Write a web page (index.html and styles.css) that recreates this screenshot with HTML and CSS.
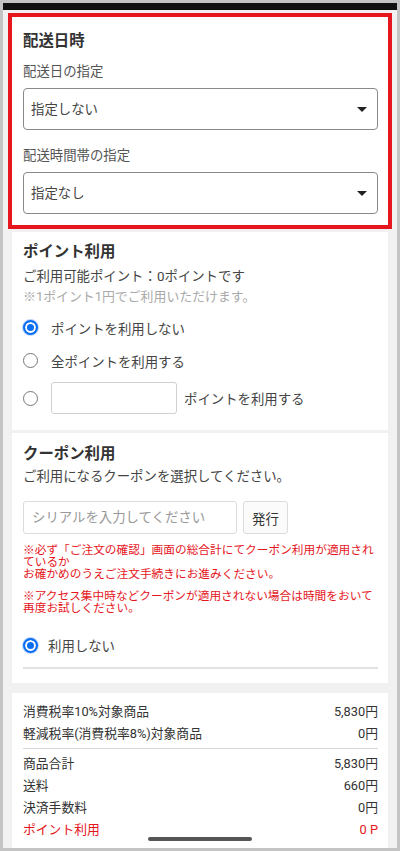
FILE: index.html
```html
<!DOCTYPE html>
<html lang="ja">
<head>
  <meta charset="UTF-8">
  <meta name="viewport" content="width=device-width, initial-scale=1.0">
  <title>ご注文手続き</title>
  <link rel="stylesheet" href="styles.css">
</head>
<body>
  <div class="screen">
    <div class="status-bar"></div>
    <div class="content">

      <section class="card card-delivery">
        <h2 class="card-title">配送日時</h2>
        <label class="field-label" for="deliveryDate">配送日の指定</label>
        <div class="select-box">
          <select id="deliveryDate">
            <option>指定しない</option>
          </select>
        </div>
        <label class="field-label field-label-second" for="deliveryTime">配送時間帯の指定</label>
        <div class="select-box">
          <select id="deliveryTime">
            <option>指定なし</option>
          </select>
        </div>
      </section>

      <section class="card card-point">
        <h2 class="card-title">ポイント利用</h2>
        <p class="point-available">ご利用可能ポイント：0ポイントです</p>
        <p class="point-note">※1ポイント1円でご利用いただけます。</p>
        <label class="radio-row">
          <input type="radio" class="radio" name="point" checked>
          <span>ポイントを利用しない</span>
        </label>
        <label class="radio-row">
          <input type="radio" class="radio" name="point">
          <span>全ポイントを利用する</span>
        </label>
        <div class="radio-row radio-row-input">
          <input type="radio" class="radio" name="point">
          <input type="text" class="point-input">
          <span>ポイントを利用する</span>
        </div>
      </section>

      <section class="card card-coupon">
        <h2 class="card-title">クーポン利用</h2>
        <p class="coupon-lead">ご利用になるクーポンを選択してください。</p>
        <div class="serial-row">
          <input type="text" class="serial-input" placeholder="シリアルを入力してください">
          <button class="btn-issue">発行</button>
        </div>
        <p class="coupon-warning">※必ず「ご注文の確認」画面の総合計にてクーポン利用が適用され<br>ているか<br>お確かめのうえご注文手続きにお進みください。</p>
        <p class="coupon-warning">※アクセス集中時などクーポンが適用されない場合は時間をおいて再度お試しください。</p>
        <label class="radio-row radio-row-coupon">
          <input type="radio" class="radio" name="coupon" checked>
          <span>利用しない</span>
        </label>
        <div class="divider"></div>
      </section>

      <section class="card card-total">
        <div class="total-row"><span>消費税率10%対象商品</span><span>5,830円</span></div>
        <div class="total-row"><span>軽減税率(消費税率8%)対象商品</span><span>0円</span></div>
        <div class="total-divider"></div>
        <div class="total-row"><span>商品合計</span><span>5,830円</span></div>
        <div class="total-row"><span>送料</span><span>660円</span></div>
        <div class="total-row"><span>決済手数料</span><span>0円</span></div>
        <div class="total-row total-row-red"><span>ポイント利用</span><span>0 P</span></div>
      </section>

    </div>
    <div class="home-indicator"></div>
  </div>
</body>
</html>
```

FILE: styles.css
```css
body {
  margin: 0;
  font-family: Roboto, "Noto Sans CJK JP", sans-serif;
  color: #333;
}
.screen {
  position: relative;
  width: 400px;
  height: 851px;
  box-sizing: border-box;
  border: 3px solid #c4c4c4;
  background-color: #f1f1f1;
  overflow: hidden;
}
.status-bar {
  height: 7px;
  background-color: #111;
}
.content {
  padding: 0 9px;
}
.card {
  background-color: white;
  padding: 0 10px 0 11px;
}
.card-title {
  margin: 0;
  font-size: 15.4px;
  line-height: 22px;
  font-weight: bold;
  color: #333;
}

/* 配送日時 */
.card-delivery {
  margin-top: 7px;
  padding-top: 13px;
  padding-bottom: 11px;
  outline: 4px solid #e5161d;
}
.field-label {
  display: block;
  margin-top: 10px;
  font-size: 13.4px;
  line-height: 20px;
  color: #555;
}
.field-label-second {
  margin-top: 16px;
}
.select-box {
  position: relative;
  margin-top: 6px;
}
.select-box select {
  appearance: none;
  -webkit-appearance: none;
  width: 100%;
  height: 42px;
  box-sizing: border-box;
  padding: 0 30px 0 7px;
  border: 1px solid #8a8a8a;
  border-radius: 4px;
  background-color: white;
  font-family: inherit;
  font-size: 13.4px;
  color: #444;
}
.select-box::after {
  content: "";
  position: absolute;
  right: 11px;
  top: 19px;
  border-left: 5px solid transparent;
  border-right: 5px solid transparent;
  border-top: 5px solid #222;
}

/* ポイント利用 */
.card-point {
  margin-top: 7px;
  padding-top: 9px;
  padding-bottom: 15px;
}
.point-available {
  margin: 3px 0 0;
  font-size: 13.4px;
  line-height: 21px;
  color: #444;
}
.point-note {
  margin: 0;
  font-size: 12.9px;
  line-height: 20px;
  color: #aaa;
}
.radio-row {
  display: flex;
  align-items: center;
  height: 33px;
  font-size: 13.4px;
  color: #444;
}
.card-point .radio-row:first-of-type {
  margin-top: 4px;
}
.radio-row .radio {
  margin: 0 13px 0 0;
}
.radio-row-input {
  height: 34px;
  margin-top: 6px;
}
.radio {
  appearance: none;
  -webkit-appearance: none;
  flex: none;
  width: 15px;
  height: 15px;
  box-sizing: border-box;
  border: 1.5px solid #777;
  border-radius: 50%;
  background-color: white;
}
.radio:checked {
  border: 2px solid #0b6ef0;
  background-color: #0b6ef0;
  box-shadow: inset 0 0 0 2px white, 0 0 0 1px #bcd6fa;
}
.point-input {
  width: 126px;
  height: 32px;
  box-sizing: border-box;
  margin-right: 7px;
  border: 1px solid #d0d0d0;
  border-radius: 3px;
}

/* クーポン利用 */
.card-coupon {
  margin-top: 3px;
  padding-top: 10px;
  padding-bottom: 14px;
}
.coupon-lead {
  margin: 2px 0 0;
  font-size: 13.4px;
  line-height: 20px;
  color: #444;
}
.serial-row {
  display: flex;
  gap: 6px;
  margin-top: 14px;
}
.serial-input {
  width: 214px;
  height: 33px;
  box-sizing: border-box;
  padding: 0 8px;
  border: 1px solid #dcdcdc;
  border-radius: 3px;
  font-family: inherit;
  font-size: 13.4px;
}
.serial-input::placeholder {
  color: #999;
}
.btn-issue {
  width: 45px;
  height: 33px;
  padding: 0;
  border: 1px solid #dcdcdc;
  border-radius: 3px;
  background-color: #fbfbfb;
  font-family: inherit;
  font-size: 13.4px;
  color: #333;
}
.coupon-warning {
  margin: 10px 0 0;
  font-size: 11.7px;
  line-height: 12px;
  color: #e5161d;
}
.radio-row-coupon {
  height: 30px;
  margin-top: 16px;
}
.radio-row-coupon .radio {
  margin-right: 10px;
}
.divider {
  height: 2px;
  margin-top: 7px;
  background-color: #e2e2e2;
}

/* 合計 */
.card-total {
  margin-top: 10px;
  padding-top: 8px;
  padding-bottom: 20px;
}
.total-row {
  display: flex;
  justify-content: space-between;
  font-size: 12.8px;
  line-height: 22px;
  color: #333;
}
.total-row-red {
  color: #e5161d;
}
.total-divider {
  height: 1px;
  margin: 3px 0 4px;
  background-color: #d8d8d8;
}

.home-indicator {
  position: absolute;
  left: 145px;
  bottom: 7px;
  width: 104px;
  height: 4px;
  border-radius: 2px;
  background-color: #555;
}
```
